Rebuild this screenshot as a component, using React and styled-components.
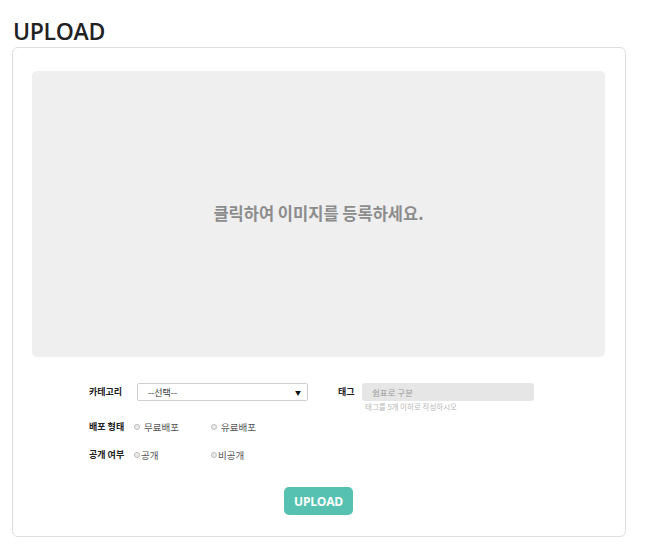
import React from "react";
import styled, { createGlobalStyle } from "styled-components";

const Global = createGlobalStyle`
  html, body { margin: 0; padding: 0; background: #fff; }
  body { font-family: "Noto Sans CJK KR", "Open Sans", sans-serif; color: #333; }
  * { box-sizing: border-box; }
`;

const Page = styled.div`
  width: 665px;
  padding: 19px 0 0 12px;
`;

const Title = styled.h1`
  margin: 0 0 4px 1px;
  font-family: "Open Sans", sans-serif;
  font-weight: 600;
  font-size: 23px;
  line-height: 24px;
  color: #222;
  letter-spacing: -0.3px;
`;

const Card = styled.div`
  width: 614px;
  height: 490px;
  border: 1px solid #dedede;
  border-radius: 6px;
  padding: 23px 20px 0 19px;
  display: flex;
  flex-direction: column;
  box-shadow: 0 0 2px rgba(0,0,0,0.04);
`;

const Drop = styled.div`
  height: 286px;
  background: #efefef;
  border-radius: 5px;
  display: flex;
  align-items: center;
  justify-content: center;
  padding-bottom: 2px;
  font-size: 16.5px;
  font-weight: 700;
  color: #8c8c8c;
  letter-spacing: 0;
  cursor: pointer;
`;

const Form = styled.div`
  display: flex;
  flex-direction: column;
  padding-left: 57px;
  margin-top: 26px;
`;

const Row = styled.div`
  display: flex;
  align-items: ${(p) => (p.$top ? "flex-start" : "center")};
  margin-top: ${(p) => p.$mt || 0}px;
  height: ${(p) => p.$h || 14}px;
`;

const Label = styled.span`
  width: ${(p) => p.$w || 45}px;
  flex: none;
  font-size: 9px;
  font-weight: 700;
  color: #222;
  line-height: 18px;
  white-space: nowrap;
`;

const Select = styled.div`
  width: 171px;
  height: 18px;
  margin-left: 3px;
  border: 1px solid #cfcfcf;
  border-radius: 2px;
  background: #fff;
  display: flex;
  align-items: center;
  justify-content: space-between;
  padding: 0 6px 0 10px;
  font-size: 9px;
  color: #333;
`;

const Arrow = styled.span`
  font-size: 6px;
  color: #111;
`;

const TagCol = styled.div`
  display: flex;
  flex-direction: column;
  margin-left: 30px;
`;

const TagInputRow = styled.div`
  display: flex;
  align-items: center;
`;

const TagInput = styled.div`
  width: 172px;
  height: 18px;
  background: #e6e6e6;
  border-radius: 3px;
  padding-left: 10px;
  font-size: 8.5px;
  line-height: 18px;
  color: #9a9a9a;
`;

const Help = styled.div`
  margin-left: 27px;
  margin-top: 1px;
  font-size: 7.5px;
  line-height: 10px;
  color: #b8b8b8;
`;

const Option = styled.label`
  width: ${(p) => p.$w || 77}px;
  display: flex;
  align-items: center;
  gap: ${(p) => (p.$tight ? 1 : 4)}px;
  font-size: 9.5px;
  color: #555;
`;

const Radio = styled.span`
  width: 6px;
  height: 6px;
  border-radius: 50%;
  border: 1px solid #bdbdbd;
  background: #ececec;
  flex: none;
`;

const Button = styled.button`
  align-self: center;
  margin-top: 25px;
  width: 69px;
  height: 28px;
  border: none;
  border-radius: 5px;
  background: #56c1b1;
  color: #fff;
  font-family: "Open Sans", sans-serif;
  font-weight: 700;
  font-size: 12px;
  letter-spacing: -0.2px;
  cursor: pointer;
`;

export default function App() {
  return (
    <Page>
      <Global />
      <Title>UPLOAD</Title>
      <Card>
        <Drop>클릭하여 이미지를 등록하세요.</Drop>
        <Form>
          <Row $top $h={28}>
            <Label>카테고리</Label>
            <Select>
              <span>--선택--</span>
              <Arrow>▼</Arrow>
            </Select>
            <TagCol>
              <TagInputRow>
                <Label $w={24}>태그</Label>
                <TagInput>쉼표로 구분</TagInput>
              </TagInputRow>
              <Help>태그를 5개 이하로 작성하시오</Help>
            </TagCol>
          </Row>
          <Row $mt={9}>
            <Label>배포 형태</Label>
            <Option>
              <Radio />
              무료배포
            </Option>
            <Option>
              <Radio />
              유료배포
            </Option>
          </Row>
          <Row $mt={14}>
            <Label>공개 여부</Label>
            <Option $tight>
              <Radio />
              공개
            </Option>
            <Option $tight>
              <Radio />
              비공개
            </Option>
          </Row>
        </Form>
        <Button>UPLOAD</Button>
      </Card>
    </Page>
  );
}
